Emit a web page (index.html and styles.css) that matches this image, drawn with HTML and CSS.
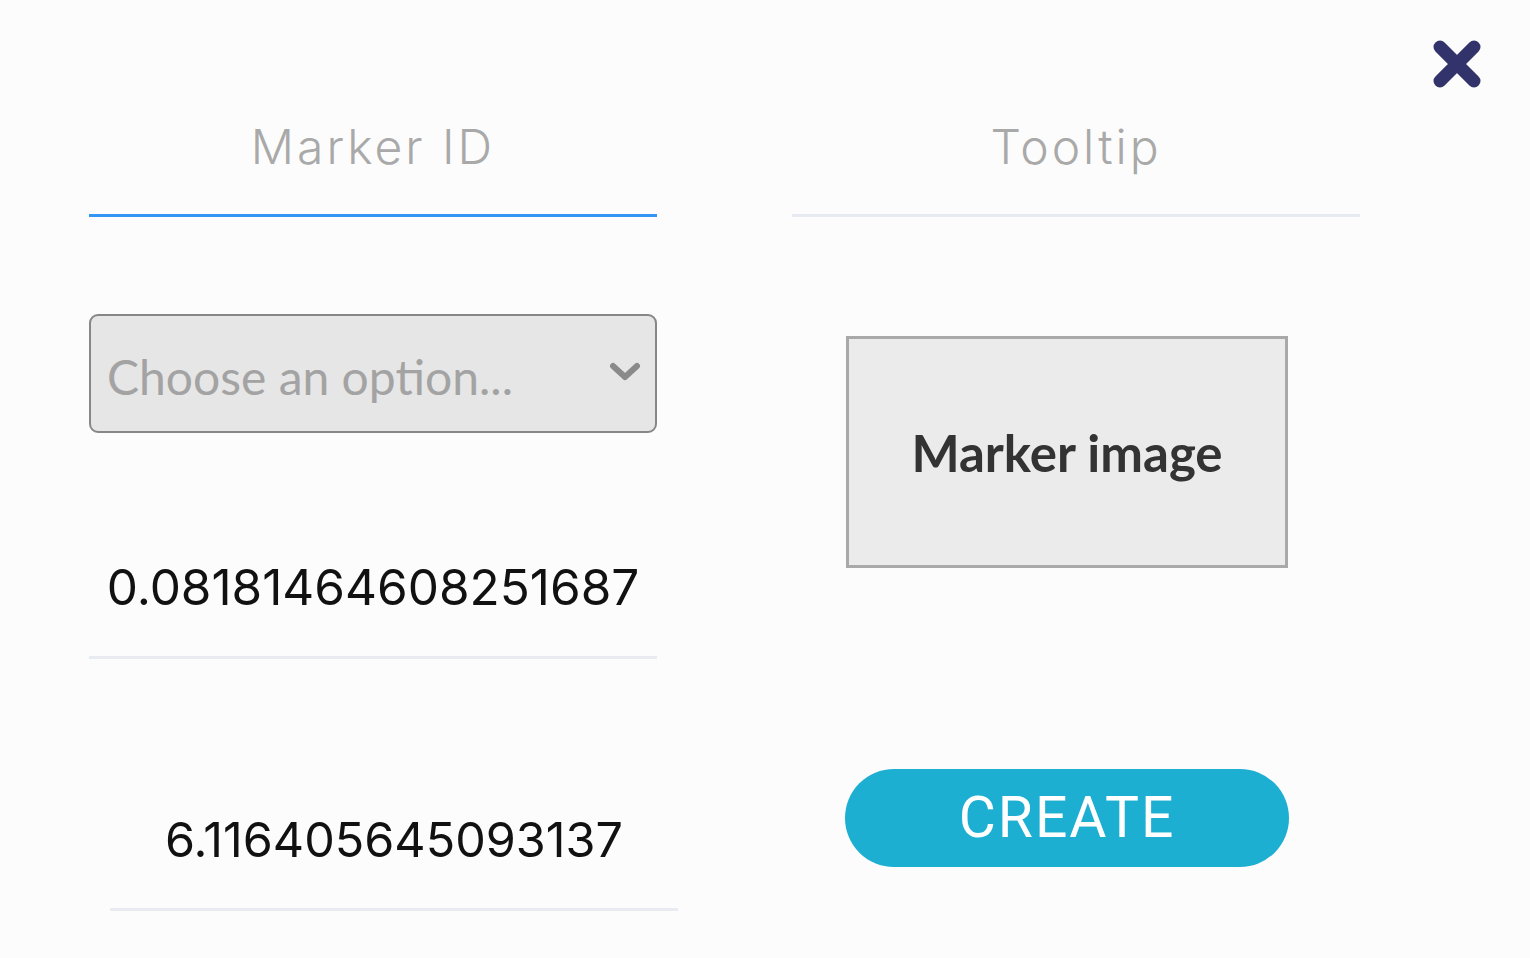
FILE: index.html
```html
<!DOCTYPE html>
<html lang="en">
<head>
    <meta charset="UTF-8">
    <meta name="viewport" content="width=device-width, initial-scale=1.0">
    <title>New marker</title>
    <link rel="stylesheet" href="styles.css">
</head>
<body>
    <div class="modal">
        <button class="close-btn" aria-label="Close">
            <svg width="50" height="48" viewBox="0 0 50 48">
                <path d="M8 7 L42 41 M42 7 L8 41" stroke="#32336a" stroke-width="13" stroke-linecap="round" fill="none"/>
            </svg>
        </button>

        <div class="columns">
            <div class="col col-left">
                <div class="tab active">Marker ID</div>

                <div class="select-box">
                    <span class="select-text">Choose an option...</span>
                    <svg class="chevron" width="32" height="20" viewBox="0 0 32 20">
                        <path d="M4 4 L16 15 L28 4" stroke="#8a8a8a" stroke-width="6" stroke-linecap="round" stroke-linejoin="round" fill="none"/>
                    </svg>
                </div>

                <div class="field field-lat">
                    <input type="text" class="field-input" value="0.08181464608251687">
                </div>

                <div class="field field-lng">
                    <input type="text" class="field-input" value="6.116405645093137">
                </div>
            </div>

            <div class="col col-right">
                <div class="tab">Tooltip</div>

                <div class="image-box">Marker image</div>

                <button class="create-btn">CREATE</button>
            </div>
        </div>
    </div>
</body>
</html>
```

FILE: styles.css
```css
body {
    margin: 0;
    background-color: #fcfcfc;
    font-family: Inter, "Open Sans", sans-serif;
    color: #111;
}
.modal {
    position: relative;
    width: 1530px;
    height: 958px;
    overflow: hidden;
}
.close-btn {
    position: absolute;
    top: 40px;
    right: 48px;
    padding: 0;
    border: none;
    background: none;
    cursor: pointer;
}
.columns {
    display: flex;
    gap: 135px;
    padding: 0 0 0 89px;
}
.col {
    width: 568px;
    display: flex;
    flex-direction: column;
}
.tab {
    font-family: Inter, sans-serif;
    font-weight: 300;
    font-size: 48px;
    letter-spacing: 3px;
    color: #a9a9a9;
    text-align: center;
    padding-top: 118px;
    height: 96px;
    line-height: 58px;
    box-sizing: content-box;
    border-bottom: 3px solid #e8eaf1;
}
.tab.active {
    border-bottom-color: #3396f4;
}
.select-box {
    margin-top: 97px;
    height: 115px;
    border: 2px solid #878787;
    border-radius: 9px;
    background-color: #e6e6e6;
    display: flex;
    align-items: center;
    justify-content: space-between;
    padding: 0 14px 0 16px;
}
.select-text {
    font-family: Lato, sans-serif;
    font-size: 48px;
    color: #a3a3a3;
    margin-top: 6px;
}
.chevron {
    margin-bottom: 4px;
}
.field {
    border-bottom: 3px solid #e8ebef;
}
.field-lat {
    margin-top: 124px;
}
.field-lng {
    margin-top: 151px;
    margin-left: 21px;
    margin-right: -21px;
}
.field-input {
    width: 100%;
    border: none;
    background: transparent;
    font-family: Inter, sans-serif;
    font-size: 49.5px;
    color: #111;
    text-align: center;
    padding: 0 0 39px 0;
    outline: none;
}
.field-lng .field-input {
    font-size: 48.5px;
}
.col-right {
    align-items: center;
}
.col-right .tab {
    align-self: stretch;
}
.image-box {
    margin-top: 119px;
    margin-right: 18px;
    width: 436px;
    height: 226px;
    border: 3px solid #a9a9a9;
    background-color: #ebebeb;
    display: flex;
    align-items: center;
    justify-content: center;
    font-family: Lato, sans-serif;
    font-weight: bold;
    font-size: 51px;
    color: #333;
}
.create-btn {
    margin-top: 201px;
    margin-right: 18px;
    width: 444px;
    height: 98px;
    border: none;
    border-radius: 49px;
    background-color: #1cafd2;
    color: #fff;
    font-family: Roboto, Inter, sans-serif;
    font-size: 57px;
    letter-spacing: 2px;
    padding-bottom: 2px;
    cursor: pointer;
}
```
